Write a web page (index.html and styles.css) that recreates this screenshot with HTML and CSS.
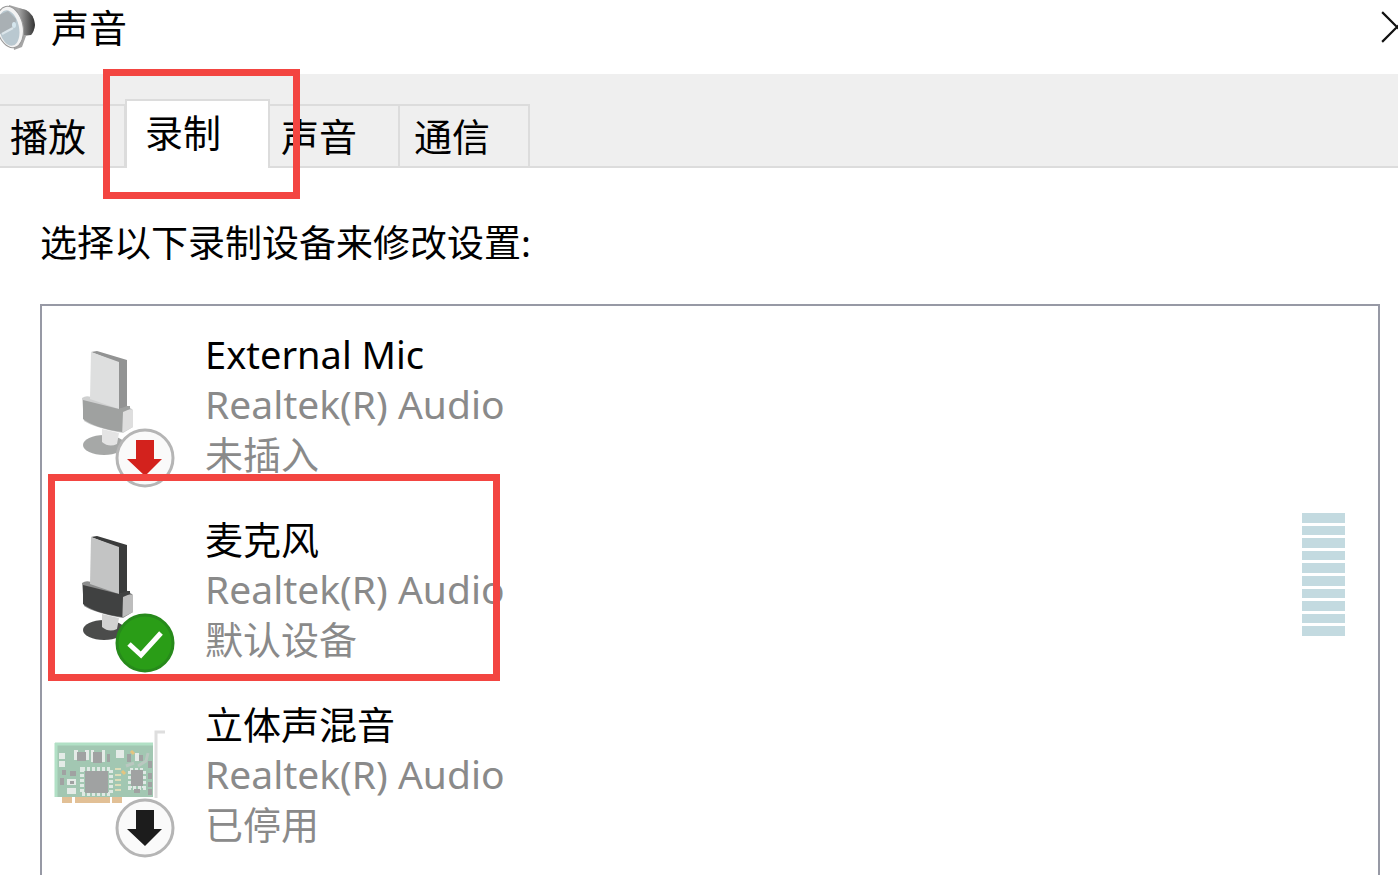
FILE: index.html
```
<!DOCTYPE html>
<html lang="zh-CN">
<head>
    <meta charset="UTF-8">
    <meta name="viewport" content="width=device-width, initial-scale=1.0">
    <title>声音</title>
    <link rel="stylesheet" href="styles.css">
</head>
<body>
<header class="titlebar">
    <svg class="app-icon" viewBox="0 0 36 52" aria-hidden="true">
        <defs>
            <linearGradient id="body" x1="0" y1="0" x2="1" y2="0">
                <stop offset="0" stop-color="#aaa"/>
                <stop offset="1" stop-color="#333"/>
            </linearGradient>
        </defs>
        <path d="M9 4 L26 9 Q34 13 35 24 Q34 31 31 34 L26 35 L22 46 L14 49 Z" fill="#a5a5a5"/>
        <path d="M18 7 L26 9 Q34 13 35 24 Q34 31 31 34 L24 34 Z" fill="url(#body)"/>
        <ellipse cx="10" cy="26" rx="13" ry="21" transform="rotate(-12 10 26)" fill="#f3f3f3" stroke="#999" stroke-width="1"/>
        <ellipse cx="9" cy="27" rx="10" ry="18" transform="rotate(-12 9 27)" fill="#b9c8d0"/>
        <path d="M-1 14 L8 10 L16 18 L15 26 L0 33 Z" fill="#a9b0b4"/>
        <path d="M2 33 L13 27" stroke="#dbe5ea" stroke-width="2"/>
        <ellipse cx="14" cy="24" rx="2" ry="3" fill="#d5e6ee"/>
    </svg>
    <h1>声音</h1>
    <button class="close" aria-label="关闭">
        <svg viewBox="0 0 32 32" aria-hidden="true"><path d="M2 2 L30 30 M30 2 L2 30" stroke="#111" stroke-width="2"/></svg>
    </button>
</header>

<nav class="tabs" role="tablist">
    <button class="tab" role="tab">播放</button>
    <button class="tab active" role="tab" aria-selected="true">录制<span class="mark mark-tab"></span></button>
    <button class="tab" role="tab">声音</button>
    <button class="tab" role="tab">通信</button>
</nav>

<main class="panel">
    <p class="hint" id="hint">选择以下录制设备来修改设置:</p>
    <ul class="devices" aria-labelledby="hint">
        <li class="device">
            <svg class="device-icon" viewBox="0 0 130 160" aria-hidden="true">
                <ellipse cx="54" cy="114" rx="21" ry="10" fill="#a6a8a7"/>
                <path d="M52 98 L69 102 L67 113 Q59 117 52 111 Z" fill="#e4e4e4"/>
                <path d="M32 67 Q36 64 41 66 L78 75 L83 79 L83 96 L73 102 Q45 97 34 90 Z" fill="#cfd0d0"/>
                <path d="M73 79 L83 79 L83 96 L73 101 Z" fill="#dedede"/>
                <path d="M41 21 L47 20 L77 29 L77 77 L69 78 L69 32 Z" fill="#929393"/>
                <path d="M41 21 L69 31 L69 78 L40 68 Z" fill="#dedfdf"/>
                <path d="M33 69 L69 78 L77 75 L80 75 L80 78 L73 81 L72 101 Q44 97 33 88 Z" fill="#9fa1a0"/>
                <circle cx="95" cy="127" r="28" fill="#fafafa" stroke="#b5b5b5" stroke-width="3"/>
                <path d="M86 109 H104 V128 H112 L95 145 L77 128 H86 Z" fill="#d3221d"/>
            </svg>
            <div class="device-text">
                <div class="device-name">External Mic</div>
                <div class="device-model">Realtek(R) Audio</div>
                <div>未插入</div>
            </div>
        </li>
        <li class="device">
            <svg class="device-icon" viewBox="0 0 130 160" aria-hidden="true">
                <ellipse cx="54" cy="114" rx="21" ry="10" fill="#4b4c4b"/>
                <path d="M52 98 L69 102 L67 113 Q59 117 52 111 Z" fill="#d2d2d2"/>
                <path d="M32 67 Q36 64 41 66 L78 75 L83 79 L83 96 L73 102 Q45 97 34 90 Z" fill="#8c8d8d"/>
                <path d="M73 79 L83 79 L83 96 L73 101 Z" fill="#bdbdbd"/>
                <path d="M41 21 L47 20 L77 29 L77 77 L69 78 L69 32 Z" fill="#3a3b3b"/>
                <path d="M41 21 L69 31 L69 78 L40 68 Z" fill="#c3c4c4"/>
                <path d="M33 69 L69 78 L77 75 L80 75 L80 78 L73 81 L72 101 Q44 97 33 88 Z" fill="#404141"/>
                <circle cx="95" cy="127" r="28" fill="#2a9d17" stroke="#278a1b" stroke-width="3"/>
                <path d="M79 128 L91 139 L111 117" fill="none" stroke="#fff" stroke-width="5"/>
            </svg>
            <div class="device-text">
                <div class="device-name">麦克风</div>
                <div class="device-model">Realtek(R) Audio</div>
                <div>默认设备</div>
            </div>
            <div class="level" role="meter" aria-label="音量" aria-valuenow="0" aria-valuemin="0" aria-valuemax="10">
                <i></i><i></i><i></i><i></i><i></i><i></i><i></i><i></i><i></i><i></i>
            </div>
            <span class="mark mark-device"></span>
        </li>
        <li class="device">
            <svg class="device-icon" viewBox="0 0 130 160" aria-hidden="true">
                <path d="M106 97 V31 H115" fill="none" stroke="#dedede" stroke-width="3"/>
                <path d="M12 95 H22 V102 H12 Z M25 95 H60 V102 H25 Z M62 95 H72 V102 H62 Z" fill="#e2c096"/>
                <rect x="5" y="42" width="98" height="54" fill="#a2c7b2"/>
                <path d="M5 43 H103 M6 42 V96" stroke="#b1e0c5" stroke-width="3"/>
                <g fill="#e4ebe7">
                    <rect x="9" y="52" width="6" height="6"/><rect x="9" y="60" width="6" height="6"/>
                    <rect x="24" y="49" width="4" height="10"/><rect x="35" y="49" width="4" height="10"/>
                    <rect x="41" y="49" width="3" height="12"/><rect x="52" y="49" width="3" height="12"/>
                    <rect x="66" y="49" width="8" height="8"/><rect x="85" y="52" width="4" height="8"/>
                    <rect x="17" y="78" width="9" height="6"/><rect x="17" y="87" width="9" height="6"/>
                </g>
                <rect x="32" y="68" width="29" height="25" fill="none" stroke="#dfe9e4" stroke-width="4" stroke-dasharray="3 2"/>
                <rect x="80" y="69" width="14" height="18" fill="none" stroke="#dfe9e4" stroke-width="4" stroke-dasharray="3 2"/>
                <path d="M65 68 h6 M65 74 h6 M65 79 h6 M65 84 h6 M65 89 h6" stroke="#dcddb9" stroke-width="2"/>
                <path d="M72 70 l3 3 M81 50 l3 3" stroke="#e5c47f" stroke-width="3"/>
                <g fill="#a0a2a2">
                    <rect x="35" y="70" width="23" height="22"/>
                    <rect x="81" y="69" width="12" height="16"/>
                    <rect x="27" y="51" width="9" height="9"/><rect x="43" y="51" width="9" height="11"/>
                    <rect x="57" y="53" width="3" height="8"/><rect x="77" y="53" width="4" height="8"/>
                    <rect x="89" y="54" width="4" height="6"/>
                    <rect x="12" y="69" width="4" height="5"/><rect x="10" y="77" width="4" height="7"/>
                    <rect x="20" y="70" width="6" height="5"/><rect x="20" y="80" width="4" height="3"/>
                    <rect x="84" y="88" width="6" height="4"/><rect x="98" y="60" width="4" height="7"/>
                    <rect x="98" y="72" width="4" height="6"/><rect x="98" y="81" width="4" height="5"/>
                    <rect x="98" y="88" width="4" height="6"/>
                </g>
                <path d="M76 65 L84 62 M88 65 L96 60 L98 52" fill="none" stroke="#bac8c0" stroke-width="3"/>
                <circle cx="95" cy="127" r="28" fill="#fafafa" stroke="#b5b5b5" stroke-width="3"/>
                <path d="M86 109 H104 V128 H112 L95 145 L77 128 H86 Z" fill="#1c1c1c"/>
            </svg>
            <div class="device-text">
                <div class="device-name">立体声混音</div>
                <div class="device-model">Realtek(R) Audio</div>
                <div>已停用</div>
            </div>
        </li>
    </ul>
</main>
</body>
</html>
```
FILE: styles.css
```
* {
    box-sizing: border-box;
}

body {
    margin: 0;
    height: 100vh;
    display: flex;
    flex-direction: column;
    overflow: hidden;
    background-color: #fff;
    color: #000;
    font-family: "Noto Sans", "Noto Sans CJK SC", sans-serif;
    font-size: 38px;
    line-height: 50px;
}

.titlebar {
    display: flex;
    align-items: center;
    height: 74px;
    padding-bottom: 20px;
}

.app-icon {
    width: 36px;
    height: 52px;
}

h1 {
    margin: 0 0 0 15px;
    font-size: 38px;
    font-weight: normal;
}

button {
    font: inherit;
    color: inherit;
    padding: 0;
    border: none;
    background: none;
    cursor: pointer;
}

/* runs past the right edge of the window */
.close {
    display: flex;
    margin-left: auto;
    margin-right: -16px;
}

.close svg {
    width: 34px;
    height: 34px;
}

.tabs {
    display: flex;
    align-items: flex-end;
    height: 94px;
    background-color: #efefef;
    box-shadow: inset 0 -2px #dcdcdc;
}

.tab {
    width: 132px;
    height: 64px;
    padding-left: 14px;
    border: 2px solid #dcdcdc;
    text-align: left;
    white-space: nowrap;
}

.tab:first-child {
    margin-left: -6px;
}

.tab + .tab {
    margin-left: -2px;
}

/* the selected tab covers the edges of its neighbours */
.tab.active {
    position: relative;
    z-index: 1;
    width: 145px;
    height: 69px;
    margin-left: -1px;
    margin-right: -3px;
    padding-left: 18px;
    padding-bottom: 5px;
    border-bottom: none;
    background-color: #fff;
}

.tab.active + .tab {
    width: 135px;
}

.mark {
    position: absolute;
    z-index: 2;
    border: 7px solid #f34541;
    pointer-events: none;
}

.mark-tab {
    top: -32px;
    left: -24px;
    width: 197px;
    height: 130px;
}

.panel {
    flex: 1;
    display: flex;
    flex-direction: column;
    min-height: 0;
    padding: 50px 18px 0 40px;
}

.hint {
    margin: 0 0 36px;
    font-size: 37px;
}

.devices {
    flex: 1;
    min-height: 0;
    margin: 0;
    padding: 7px 33px 0 8px;
    list-style: none;
    border: 2px solid #9799a5;
    border-bottom: none;
}

.device {
    position: relative;
    display: flex;
    align-items: flex-start;
    height: 185px;
    padding-top: 18px;
    color: #8a8a8a;
}

.device-icon {
    flex: none;
    width: 130px;
    height: 160px;
}

.device-text {
    margin-top: -2px;
    margin-left: 25px;
    white-space: nowrap;
}

.device-name {
    color: #000;
}

.device-model {
    font-size: 39px;
}

.level {
    display: flex;
    flex-direction: column;
    gap: 3px;
    width: 43px;
    height: 123px;
    margin-top: -3px;
    margin-left: auto;
}

.level i {
    flex: 1;
    background-color: #c3dae0;
}

.mark-device {
    top: -24px;
    left: -2px;
    width: 452px;
    height: 207px;
}
```
